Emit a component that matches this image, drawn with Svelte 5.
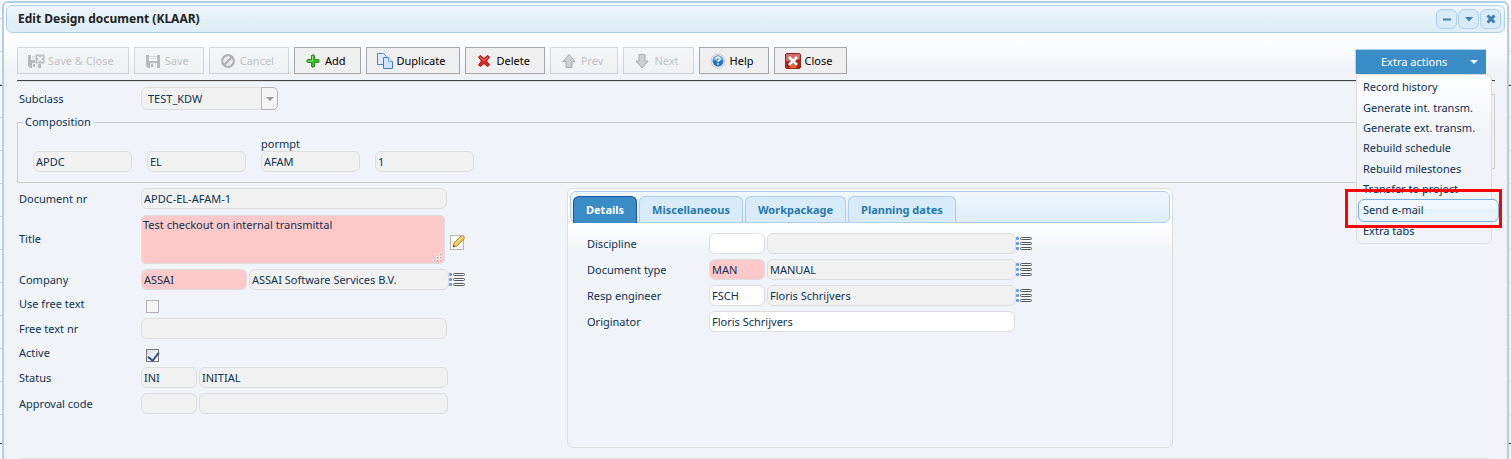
<script>
  const tools = [
    { label: 'Save & Close', icon: 'saveclose', off: true },
    { label: 'Save', icon: 'save', off: true },
    { label: 'Cancel', icon: 'cancel', off: true },
    { label: 'Add', icon: 'add' },
    { label: 'Duplicate', icon: 'duplicate' },
    { label: 'Delete', icon: 'delete' },
    { label: 'Prev', icon: 'prev', off: true },
    { label: 'Next', icon: 'next', off: true },
    { label: 'Help', icon: 'help' },
    { label: 'Close', icon: 'close' },
  ];
  const menu = [
    'Record history',
    'Generate int. transm.',
    'Generate ext. transm.',
    'Rebuild schedule',
    'Rebuild milestones',
    'Transfer to project',
    'Send e-mail',
    'Extra tabs',
  ];
  const composition = [
    { prompt: '', value: 'APDC' },
    { prompt: '', value: 'EL' },
    { prompt: 'pormpt', value: 'AFAM' },
    { prompt: '', value: '1' },
  ];
  const tabs = ['Details', 'Miscellaneous', 'Workpackage', 'Planning dates'];
  const details = [
    { id: 'discipline', label: 'Discipline', code: '', text: '' },
    { id: 'doctype', label: 'Document type', code: 'MAN', text: 'MANUAL', required: true },
    { id: 'engineer', label: 'Resp engineer', code: 'FSCH', text: 'Floris Schrijvers' },
  ];
  let activeTab = $state('Details');
</script>

{#snippet listIcon(name)}
  <button class="icon-btn" aria-label={name}>
    <svg width="16" height="14" viewBox="0 0 16 14">
      {#each [0, 5, 10] as y}
        <rect x="0" y={y} width="3" height="3" rx="1" fill="#5a9bf5" />
        <rect x="4.5" y={y + 0.5} width="11" height="2" rx="1" fill="#fff" stroke="#55565a" />
      {/each}
    </svg>
  </button>
{/snippet}

{#snippet toolIcon(kind)}
  <svg class="tool-icon" width="16" height="16" viewBox="0 0 16 16">
    {#if kind === 'saveclose'}
      <path d="M0 2h13v13H2l-2-2z" fill="#666" />
      <path d="M3 2h7v5H3z" fill="#f4f4f4" />
      <path d="M4 3.5h5M4 5.5h5" stroke="#aaa" />
      <path d="M4 10h6v5H4z" fill="#e4e4e4" />
      <path d="M5 11h2v3H5z" fill="#666" />
      <rect x="7.5" y="1.5" width="9" height="9" rx="1" fill="#777" stroke="#aaa" />
      <path d="M9.5 3.5l5 5M14.5 3.5l-5 5" stroke="#fff" stroke-width="1.6" />
    {:else if kind === 'save'}
      <path d="M1 2h14v13H3l-2-2z" fill="#666" />
      <path d="M4 2h8v6H4z" fill="#f4f4f4" />
      <path d="M4 3.5h8M5 5.5h6" stroke="#aaa" />
      <path d="M5 10h7v5H5z" fill="#e4e4e4" />
      <path d="M6 11h2v3H6z" fill="#666" />
    {:else if kind === 'cancel'}
      <circle cx="8" cy="8" r="7" fill="#555" />
      <circle cx="8" cy="8" r="4.2" fill="#ddd" stroke="#eee" />
      <path d="M4.5 11.5l7-7" stroke="#555" stroke-width="2.4" />
    {:else if kind === 'add'}
      <path d="M6.5 2.5q1.5-1.5 3 0v4h4q1.5 1.5 0 3h-4v4q-1.5 1.5-3 0v-4h-4q-1.5-1.5 0-3h4z" fill="#3fba2c" stroke="#218c17" />
      <path d="M7.5 3v5H3" fill="none" stroke="#8be070" />
    {:else if kind === 'duplicate'}
      <path d="M.5 .5h6l3 3v8h-9z" fill="#dceafc" stroke="#4a86d0" />
      <path d="M6.5 4.5h5l4 4v7h-9z" fill="#d3e5fb" stroke="#3f7dcc" />
      <path d="M11.5 4.5v4h4" fill="#fff" stroke="#6c9fdf" />
    {:else if kind === 'delete'}
      <path d="M2.5 4l2-1.5L8 5.5l3.5-3 2 1.5-3 4 3 4-2 1.5L8 10.5l-3.5 3-2-1.5 3-4z" fill="#d92a24" stroke="#a3110f" stroke-linejoin="round" />
      <path d="M4 4.5l4 3 4-3" fill="none" stroke="#f08078" />
    {:else if kind === 'prev'}
      <path d="M8 1.5l6 7h-3v6H5v-6H2z" fill="#999" stroke="#444" />
    {:else if kind === 'next'}
      <path d="M8 15l6-7h-3V1.5H5V8H2z" fill="#999" stroke="#444" />
    {:else if kind === 'help'}
      <circle cx="8" cy="8" r="7" fill="#f3f3f3" stroke="#c9c9c9" />
      <circle cx="8" cy="8" r="5.5" fill="#2473c8" />
      <path d="M3 7a5 4.5 0 0 1 10 0q-5 2-10 0z" fill="#69a9e6" />
      <path d="M6 6.2c0-2.6 4-2.6 4-.2 0 1.5-2 1.5-2 3M8 10.2v1.6" fill="none" stroke="#fff" stroke-width="1.5" />
    {:else}
      <rect x=".5" y=".5" width="15" height="15" rx="1.5" fill="#b3221a" stroke="#8c2722" />
      <path d="M1 1h14v5q-7 3-14 2z" fill="#cf6f69" />
      <path d="M4 15l4-5 4 5z" fill="#f2681d" />
      <path d="M4 4l8 8M12 4l-8 8" stroke="#fff" stroke-width="2.6" />
    {/if}
  </svg>
{/snippet}

<div class="page">
  <section class="dialog" aria-label="Edit Design document">
    <header class="titlebar">
      <h1>Edit Design document (KLAAR)</h1>
      <div class="window-buttons">
        <button aria-label="Minimize"><svg width="10" height="10"><path d="M1 5.5h8" stroke="#3d80b3" stroke-width="2" /></svg></button>
        <button aria-label="Roll up"><svg width="10" height="10"><path d="M1 3h8L5 7.5z" fill="#3d80b3" /></svg></button>
        <button aria-label="Close window"><svg width="10" height="10"><path d="M1.5 1.5l7 7M8.5 1.5l-7 7" stroke="#3d80b3" stroke-width="3" /></svg></button>
      </div>
    </header>

    <div class="content">
      <div class="toolbar">
        {#each tools as t}
          <button class="tool" disabled={t.off}>{@render toolIcon(t.icon)}<span>{t.label}</span></button>
        {/each}
        <div class="extra">
          <button class="extra-btn" aria-haspopup="menu" aria-expanded="true">
            <span>Extra actions</span>
            <svg width="8" height="4"><path d="M0 0h8L4 4z" fill="#fff" /></svg>
          </button>
          <div class="edge"></div>
          <ul class="menu">
            {#each menu as m}
              <li class:hover={m === 'Send e-mail'}><a href="#action">{m}</a></li>
            {/each}
          </ul>
          <div class="marker"></div>
        </div>
      </div>

      <div class="row subclass">
        <label for="subclass">Subclass</label>
        <div class="select">
          <select id="subclass"><option>TEST_KDW</option></select>
          <span class="arrow"><svg width="8" height="4"><path d="M0 0h8L4 4z" fill="#999" /></svg></span>
        </div>
      </div>

      <fieldset>
        <legend>Composition</legend>
        <div class="parts">
          {#each composition as c, i}
            <div class="part">
              <label for="part{i}">{c.prompt}</label>
              <input id="part{i}" readonly value={c.value} />
            </div>
          {/each}
        </div>
      </fieldset>

      <div class="columns">
        <div class="form">
          <div class="row"><label for="docnr">Document nr</label><input id="docnr" class="full" readonly value="APDC-EL-AFAM-1" /></div>
          <div class="row title">
            <label for="title">Title</label>
            <div class="area">
              <textarea id="title" class="required">Test checkout on internal transmittal</textarea>
              <svg class="grip" width="9" height="9" viewBox="0 0 9 9">
                {#each [[6, 0], [3, 3], [6, 3], [0, 6], [3, 6], [6, 6]] as [x, y]}
                  <rect {x} {y} width="2" height="2" fill="#fff" /><rect x={x + 1} y={y + 1} width="1" height="1" fill="#999" />
                {/each}
              </svg>
            </div>
            <button class="icon-btn edit" aria-label="Edit title">
              <svg width="16" height="16" viewBox="0 0 16 16">
                <rect x=".5" y="1.5" width="13" height="14" fill="#fff" stroke="#b3b5b8" />
                <path d="M3 13l1-4 7.5-7.5 3 3L7 12z" fill="#f3c552" stroke="#b5862b" />
                <path d="M5 10l7-7" stroke="#fff0b0" />
                <path d="M11 2l1.5-1.5 3 3L14 5z" fill="#e8a590" />
                <path d="M3 13l.5-2 1.5 1.5z" fill="#333" />
              </svg>
            </button>
          </div>
          <div class="row">
            <label for="company">Company</label>
            <input id="company" class="mid required" value="ASSAI" />
            <input class="company-name" aria-label="Company name" readonly value="ASSAI Software Services B.V." />
            {@render listIcon('Select company')}
          </div>
          <div class="row check"><label for="freetext">Use free text</label><input id="freetext" type="checkbox" disabled /></div>
          <div class="row"><label for="freenr">Free text nr</label><input id="freenr" class="full" readonly /></div>
          <div class="row check"><label for="active">Active</label><input id="active" type="checkbox" checked /></div>
          <div class="row">
            <label for="status">Status</label>
            <input id="status" class="code" readonly value="INI" /><input class="desc" aria-label="Status name" readonly value="INITIAL" />
          </div>
          <div class="row">
            <label for="approval">Approval code</label>
            <input id="approval" class="code" readonly /><input class="desc" aria-label="Approval name" readonly />
          </div>
        </div>

        <div class="panel">
          <div class="tabs" role="tablist">
            {#each tabs as t}
              <button role="tab" aria-selected={activeTab === t} class:active={activeTab === t} onclick={() => (activeTab = t)}>{t}</button>
            {/each}
          </div>
          <div class="panel-body">
            {#each details as d}
              <div class="row">
                <label for={d.id}>{d.label}</label>
                <input id={d.id} class="code" class:required={d.required} value={d.code} />
                <input class="desc" aria-label="{d.label} name" readonly value={d.text} />
                {@render listIcon('Select ' + d.label)}
              </div>
            {/each}
            <div class="row"><label for="originator">Originator</label><input id="originator" class="full" value="Floris Schrijvers" /></div>
          </div>
        </div>
      </div>
      <div class="next-section"></div>
    </div>
  </section>
</div>

<style>
  :global(body) { background: #f3f6f9; }
  .page, .page * { box-sizing: border-box; }
  .page {
    height: 100vh;
    overflow: hidden;
    padding: 1px 2px 0;
    font: 11px/16px "Noto Sans", "Open Sans", sans-serif;
    color: #0d3252;
    background:
      linear-gradient(#333, #333) 0 85px / 100% 1px no-repeat,
      linear-gradient(#333, #333) 0 443px / 100% 1px no-repeat,
      repeating-linear-gradient(#f6f8fa 0 32px, #d3d6d9 32px 33px) 0 -14px;
  }
  button, input, select, textarea { font: inherit; color: inherit; margin: 0; }
  .dialog {
    min-height: 100%;
    border: 2px solid #aed0ea;
    border-bottom: 0;
    border-radius: 6px 6px 0 0;
    background: linear-gradient(#fff 30px, #fbfcfe 44px, #f0f4f8 68px);
    padding: 2px 2px 0;
  }
  .titlebar {
    display: flex;
    align-items: center;
    justify-content: space-between;
    height: 28px;
    padding: 0 3px 0 11px;
    border: 1px solid #aed0ea;
    border-radius: 6px;
    background: linear-gradient(#eff6fc, #e3f0f8 50%, #deedf7);
  }
  h1 { margin: 0; font-size: 12px; line-height: 16px; font-weight: 700; color: #222; }
  .window-buttons { display: flex; gap: 1px; }
  .window-buttons button {
    display: grid;
    place-items: center;
    width: 21px;
    height: 20px;
    padding: 0;
    border: 1px solid #aed0ea;
    border-radius: 6px;
    background: #d9ebf8;
  }
  .content { padding: 14px 10px 0 11px; }
  .toolbar {
    display: flex;
    gap: 5px;
    height: 34px;
    border-bottom: 1px solid #444;
    box-shadow: 0 1px #dcdfe2;
  }
  .tool {
    display: flex;
    align-items: center;
    gap: 4px;
    height: 27px;
    padding: 0 14px 0 10px;
    border: 1px solid #a6a6a6;
    background: #efefef;
    color: #000;
    white-space: nowrap;
  }
  .tool:disabled { opacity: .42; }
  .tool:disabled span { color: #777; }
  .tool-icon { overflow: visible; flex: none; }
  .extra { position: relative; width: 131px; margin: 2px 9px 0 auto; }
  .extra-btn {
    display: flex;
    align-items: center;
    justify-content: space-between;
    width: 100%;
    height: 25px;
    padding: 0 8px 0 25px;
    border: 1px solid #aed0ea;
    border-width: 1px 0 0 1px;
    background: #3a8cc6;
    color: #fff;
  }
  .edge { position: absolute; top: 45px; right: -9px; width: 12px; height: 75px; border: 1px solid #ccc; border-left: 0; }
  .menu {
    position: absolute;
    z-index: 1;
    top: 25px;
    left: 1px;
    width: 136px;
    height: 170px;
    margin: 0;
    padding: 2px;
    display: grid;
    grid-auto-rows: 1fr;
    list-style: none;
    border: 1px solid #ddd;
    border-radius: 6px;
    background: linear-gradient(#fff, #f0f4f8 60px);
  }
  li { display: grid; align-items: center; padding: 0 4px; min-height: 0; white-space: nowrap; }
  li a { color: inherit; text-decoration: none; }
  li.hover {
    width: 141px;
    height: 23px;
    margin: -1px -1px;
    border: 1px solid #74b2e2;
    border-radius: 6px;
    background: linear-gradient(#f0f7fd 45%, #e4f1fb 45%, #edf6fd);
  }
  .marker { position: absolute; z-index: 2; top: 140px; left: -10px; width: 157px; height: 39px; border: 3px solid #f00; }

  .row { display: flex; align-items: center; height: 21px; }
  .row > label { width: 124px; padding-left: 2px; flex: none; }
  .row input + input { margin-left: 2px; }
  input:not([type]), textarea, select {
    height: 21px;
    padding: 0 2px;
    border: 1px solid #ddd;
    border-radius: 6px;
    background: #fff;
    outline: 0;
  }
  input[readonly]:not([type]) { background: #f1f1f1; }
  input.required:not([type]), textarea.required { background: #ffc9c9; }
  .full { width: 306px; }
  .mid { width: 106px; }
  .code { width: 56px; }
  .desc { width: 249px; }
  .company-name { width: 200px; }
  .subclass { height: 23px; margin: 6px 0 5px; }
  .select { display: flex; position: relative; width: 137px; }
  select { width: 100%; height: 23px; padding: 0 6px; appearance: none; background: #f1f1f1; }
  .arrow {
    position: absolute;
    inset: 0 0 0 auto;
    display: grid;
    place-items: center;
    width: 17px;
    border: 1px solid #b5b5b5;
    border-radius: 0 5px 5px 0;
    background: #f4f4f4;
    pointer-events: none;
  }
  fieldset { margin: 0 12px 5px 0; padding: 8px 15px 10px; border: 1px solid #ccc; min-width: 0; }
  legend { margin-left: -10px; padding: 0 3px 0 2px; line-height: 14px; }
  .parts { display: flex; gap: 15px; }
  .part { width: 99px; }
  .part label { display: block; height: 14px; line-height: 14px; }
  .part input { display: block; width: 100%; }

  .columns { display: flex; align-items: flex-start; }
  .form { width: 550px; flex: none; display: flex; flex-direction: column; gap: 5px; }
  .title { height: 50px; }
  .area { position: relative; width: 304px; height: 49px; }
  textarea { display: block; width: 100%; height: 100%; padding: 1px; resize: none; border-radius: 5px; }
  .grip { position: absolute; right: 3px; bottom: 2px; }
  .check { height: 18px; }
  .check input { align-self: flex-end; width: 13px; height: 13px; margin-left: 5px; }
  input[type="checkbox"] {
    appearance: none;
    border: 1px solid #777;
    background: linear-gradient(135deg, #d8dce4, #fff);
  }
  input[type="checkbox"]:disabled { border-color: #b1b1b1; background: #f6f6f6; }
  input[type="checkbox"]:checked::after {
    content: "";
    display: block;
    width: 5px;
    height: 9px;
    margin: 0 0 0 3px;
    border: solid #3a4f94;
    border-width: 0 2px 2px 0;
    transform: rotate(38deg);
  }
  .icon-btn { display: flex; padding: 0; border: 0; background: none; }
  .edit { margin: 5px 0 0 5px; }

  .panel {
    flex: 0 1 41%;
    height: 260px;
    padding: 2px;
    border: 1px solid #ddd;
    border-radius: 6px;
    background: linear-gradient(#fff 30px, #fbfcfe 44px, #f0f4f8 62px);
  }
  .tabs {
    display: flex;
    align-items: flex-end;
    gap: 2px;
    height: 32px;
    padding: 0 2px;
    border: 1px solid #aed0ea;
    border-radius: 6px;
    background: linear-gradient(#f0f7fd, #deedf7);
  }
  .tabs button {
    height: 26px;
    padding: 0 12px;
    border: 1px solid #aed0ea;
    border-bottom: 0;
    border-radius: 6px 6px 0 0;
    background: #d7ebf9;
    color: #2779aa;
    font-weight: 700;
  }
  .tabs button.active { height: 27px; margin-bottom: -1px; border-color: #2055a0; background: #3a8cc6; color: #fff; }
  .panel-body { display: flex; flex-direction: column; gap: 5px; padding: 10px 0 0 15px; }
  .next-section { height: 12px; margin: 10px 2px 0 0; border: 1px solid #ddd; border-radius: 6px; }
</style>
